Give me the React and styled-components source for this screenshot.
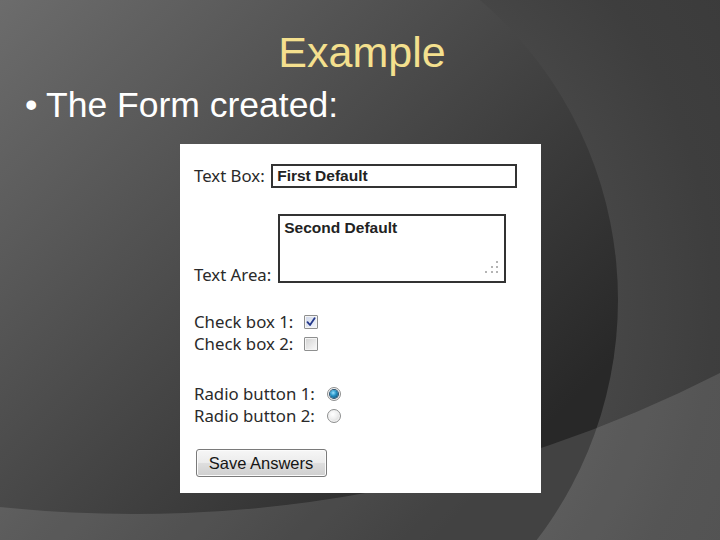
import React from "react";
import styled, { createGlobalStyle } from "styled-components";

const GlobalStyle = createGlobalStyle`
  html, body { margin: 0; padding: 0; background: #3c3c3c; }
  body { width: 720px; height: 540px; overflow: hidden; }
`;

const Slide = styled.div`
  position: relative;
  width: 720px;
  height: 540px;
  overflow: hidden;
  font-family: "Liberation Sans", Arial, sans-serif;
`;

const Backdrop = styled.svg`
  position: absolute;
  inset: 0;
  z-index: 0;
`;

const Content = styled.div`
  position: relative;
  z-index: 1;
  display: flex;
  flex-direction: column;
  padding-top: 31px;
`;

const Title = styled.h1`
  margin: 0;
  padding-left: 4px;
  font-size: 43px;
  line-height: 43px;
  font-weight: 400;
  color: #f4e08e;
  text-align: center;
`;

const Bullet = styled.div`
  display: flex;
  align-items: baseline;
  margin-top: 13px;
  padding-left: 25px;
  font-size: 35.5px;
  line-height: 36px;
  color: #ffffff;
`;

const BulletDot = styled.span`
  width: 21px;
  flex: none;
`;

const Panel = styled.div`
  box-sizing: border-box;
  margin: 21px 0 0 180px;
  width: 361px;
  height: 349px;
  background: #ffffff;
  padding: 20px 0 16px 14px;
  display: flex;
  flex-direction: column;
  align-items: flex-start;
`;

const FieldRow = styled.div`
  display: flex;
  align-items: ${(p) => (p.$bottom ? "flex-end" : "center")};
  gap: ${(p) => p.$gap}px;
  margin-top: ${(p) => p.$top || 0}px;
  height: ${(p) => p.$h}px;
`;

const Group = styled.div`
  display: flex;
  flex-direction: column;
  margin-top: ${(p) => p.$top}px;
`;

const Label = styled.span`
  font-family: "Noto Sans", "DejaVu Sans", sans-serif;
  font-size: 16.8px;
  line-height: ${(p) => p.$lh || 22}px;
  color: #2a2a2a;
  white-space: nowrap;
`;

const TextInput = styled.input`
  box-sizing: border-box;
  width: 246px;
  height: 24px;
  margin: 0;
  border: 2px solid #333333;
  border-radius: 0;
  padding: 0 0 0 4.5px;
  font: bold 15.5px "Liberation Sans", Arial, sans-serif;
  color: #222222;
  background: #ffffff;
  outline: none;
`;

const AreaWrap = styled.div`
  position: relative;
  width: 228px;
  height: 69px;
`;

const TextArea = styled.textarea`
  box-sizing: border-box;
  width: 100%;
  height: 100%;
  margin: 0;
  display: block;
  border: 2px solid #333333;
  border-radius: 0;
  padding: 3px 4px;
  font: bold 15.5px "Liberation Sans", Arial, sans-serif;
  line-height: normal;
  color: #222222;
  background: #ffffff;
  resize: none;
  outline: none;
  overflow: hidden;
`;

const Grip = styled.svg`
  position: absolute;
  right: 7px;
  bottom: 8px;
`;

const Box = styled.span`
  box-sizing: border-box;
  width: 14px;
  height: 14px;
  border: 1px solid #8e8f8f;
  border-radius: ${(p) => (p.$round ? "50%" : "1px")};
  background: ${(p) =>
    p.$round
      ? "radial-gradient(circle at 40% 35%, #ffffff 0%, #f0f0f0 40%, #cfcfcf 100%)"
      : p.$on
      ? "linear-gradient(135deg, #cfd7ea, #f4f6fb)"
      : "linear-gradient(135deg, #d2d2d2, #fbfbfb)"};
  box-shadow: inset 0 0 0 1px #f4f4f4;
  display: flex;
  align-items: center;
  justify-content: center;
  flex: none;
`;

const RadioDot = styled.span`
  width: 8px;
  height: 8px;
  border-radius: 50%;
  background: radial-gradient(circle at 40% 35%, #9be2ff 0%, #2a97c9 40%, #0b4f78 85%);
  box-shadow: 0 0 0 1px #27506e;
`;

const SaveButton = styled.button`
  box-sizing: border-box;
  margin: 22px 0 0 1.5px;
  width: 131px;
  height: 28px;
  padding: 0;
  border: 1px solid #7a7a7a;
  border-radius: 3px;
  background: linear-gradient(#f6f6f6 0%, #ececec 48%, #dedede 52%, #cfcfcf 100%);
  box-shadow: inset 0 0 0 1px #fbfbfb;
  font: 16.5px "Liberation Sans", Arial, sans-serif;
  color: #151515;
`;

function Backgroundart() {
  return (
    <Backdrop width="720" height="540" viewBox="0 0 720 540">
      <defs>
        <radialGradient id="bg" gradientUnits="userSpaceOnUse" cx="223" cy="300" r="700">
          <stop offset="0.56" stopColor="#464646" />
          <stop offset="0.7" stopColor="#3e3e3e" />
          <stop offset="1" stopColor="#383838" />
        </radialGradient>
        <linearGradient id="disc" gradientUnits="userSpaceOnUse" x1="0" y1="0" x2="486" y2="486">
          <stop offset="0" stopColor="#6c6c6c" />
          <stop offset="1" stopColor="#282828" />
        </linearGradient>
      </defs>
      <rect x="0" y="0" width="720" height="540" fill="url(#bg)" />
      <circle cx="223" cy="300" r="395" fill="url(#disc)" />
      <path d="M0 507 A 1288 1288 0 0 0 720 373 L720 540 L0 540 Z" fill="rgba(255,255,255,0.12)" />
    </Backdrop>
  );
}

function CheckMark() {
  return (
    <svg width="10" height="10" viewBox="0 0 10 10">
      <path d="M1.5 5.2 L4 8 L8.6 1.2" fill="none" stroke="#23378a" strokeWidth="1.8" strokeLinecap="round" strokeLinejoin="round" />
    </svg>
  );
}

export default function App() {
  return (
    <>
      <GlobalStyle />
      <Slide>
        <Backgroundart />
        <Content>
          <Title>Example</Title>
          <Bullet>
            <BulletDot>•</BulletDot>
            <span>The Form created:</span>
          </Bullet>
          <Panel>
            <FieldRow $gap={6} $h={24}>
              <Label>Text Box:</Label>
              <TextInput type="text" defaultValue="First Default" readOnly />
            </FieldRow>
            <FieldRow $bottom $gap={7} $h={69} $top={26}>
              <Label $lh={16}>Text Area:</Label>
              <AreaWrap>
                <TextArea defaultValue="Second Default" readOnly />
                <Grip width="14" height="14" viewBox="0 0 14 14">
                  <g fill="#b4b4b4">
                    <rect x="11" y="0" width="2" height="2" />
                    <rect x="6" y="5" width="2" height="2" />
                    <rect x="11" y="5" width="2" height="2" />
                    <rect x="0" y="10" width="2" height="2" />
                    <rect x="6" y="10" width="2" height="2" />
                    <rect x="11" y="10" width="2" height="2" />
                  </g>
                </Grip>
              </AreaWrap>
            </FieldRow>
            <Group $top={28}>
              <FieldRow $gap={11} $h={22}>
                <Label>Check box 1:</Label>
                <Box $on>
                  <CheckMark />
                </Box>
              </FieldRow>
              <FieldRow $gap={11} $h={22}>
                <Label>Check box 2:</Label>
                <Box />
              </FieldRow>
            </Group>
            <Group $top={28}>
              <FieldRow $gap={12} $h={22}>
                <Label>Radio button 1:</Label>
                <Box $round>
                  <RadioDot />
                </Box>
              </FieldRow>
              <FieldRow $gap={12} $h={22}>
                <Label>Radio button 2:</Label>
                <Box $round />
              </FieldRow>
            </Group>
            <SaveButton type="button">Save Answers</SaveButton>
          </Panel>
        </Content>
      </Slide>
    </>
  );
}
